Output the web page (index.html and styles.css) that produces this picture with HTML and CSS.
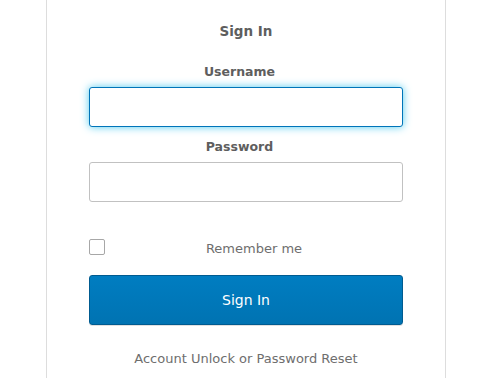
FILE: index.html
```html
<!DOCTYPE html>
<html lang="en">
<head>
<meta charset="utf-8">
<title>Sign In</title>
<link rel="stylesheet" href="styles.css">
</head>
<body>
<main class="card">
  <h2 class="title">Sign In</h2>
  <form class="form">
    <label class="field-label" for="username">Username</label>
    <input class="text-input focused" id="username" type="text">
    <label class="field-label field-label--second" for="password">Password</label>
    <input class="text-input" id="password" type="password">
    <div class="remember">
      <span class="checkbox"></span>
      <span class="remember-text">Remember me</span>
    </div>
    <button class="btn" type="button">Sign In</button>
  </form>
  <a class="help-link" href="#">Account Unlock or Password Reset</a>
</main>
</body>
</html>
```

FILE: styles.css
```css
html, body {
  margin: 0;
  padding: 0;
  background: #ffffff;
  height: 100%;
}
body {
  font-family: "DejaVu Sans", "Open Sans", sans-serif;
  color: #5e5e5e;
  overflow: hidden;
}
.card {
  box-sizing: border-box;
  width: 400px;
  min-height: 378px;
  margin-left: 46px;
  border-left: 1px solid #dddddd;
  border-right: 1px solid #dddddd;
  padding: 21px 42px 0;
  display: flex;
  flex-direction: column;
}
.title {
  margin: 0;
  font-size: 13.5px;
  line-height: 20px;
  font-weight: 600;
  text-align: center;
  color: #5e5e5e;
}
.form {
  display: flex;
  flex-direction: column;
}
.field-label {
  margin-top: 21px;
  padding-right: 13px;
  font-size: 12.5px;
  line-height: 20px;
  font-weight: bold;
  text-align: center;
  color: #5e5e5e;
}
.field-label--second {
  margin-top: 10px;
}
.text-input {
  box-sizing: border-box;
  margin: 5px 0 0;
  width: 314px;
  height: 40px;
  border: 1px solid #c1c1c1;
  border-radius: 3px;
  background: #fff;
  outline: none;
  font: inherit;
  padding: 0 8px;
}
.text-input.focused {
  border-color: #0074b9;
  box-shadow: 0 0 8px #51cbee;
}
.remember {
  margin-top: 37px;
  display: flex;
  align-items: center;
  height: 16px;
}
.checkbox {
  box-sizing: border-box;
  width: 16px;
  height: 16px;
  border: 1px solid #a7a7a7;
  border-radius: 2px;
  background: #fff;
}
.remember-text {
  flex: 1;
  padding-top: 2px;
  text-align: center;
  font-size: 13px;
  color: #6e6e6e;
}
.btn {
  box-sizing: border-box;
  margin-top: 20px;
  width: 314px;
  height: 50px;
  border: 1px solid #005b90;
  border-radius: 3px;
  background: linear-gradient(#007dc1, #0073b2);
  box-shadow: 0 1px 0 rgba(0, 0, 0, 0.12);
  color: #ffffff;
  font-family: inherit;
  font-size: 14px;
  cursor: pointer;
}
.help-link {
  margin-top: 24px;
  font-size: 13px;
  line-height: 20px;
  text-align: center;
  color: #6e6e6e;
  text-decoration: none;
}
```
